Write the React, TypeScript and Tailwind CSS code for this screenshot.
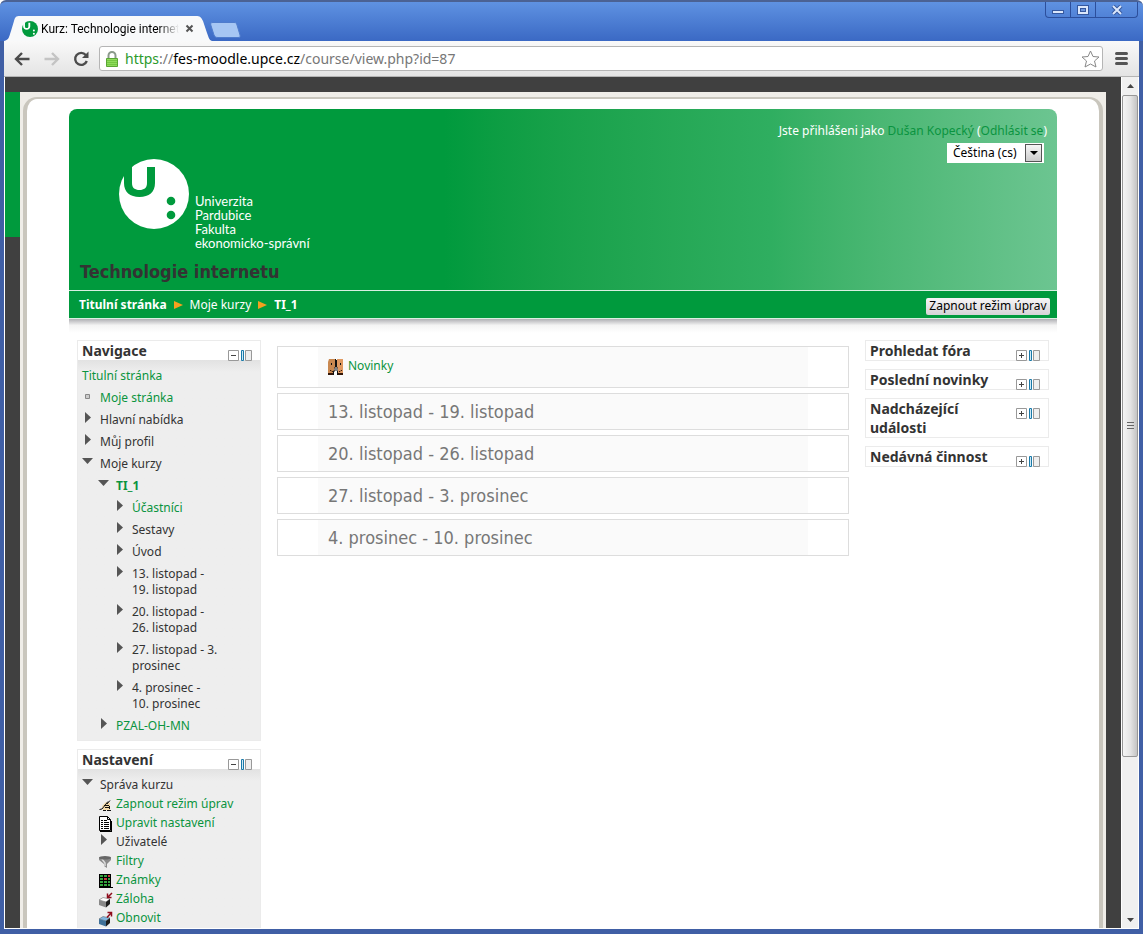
import React, { useState } from 'react';

interface TreeNode {
  label: string;
  state?: 'open' | 'closed' | 'leaf';
  link?: boolean;
  bold?: boolean;
  children?: TreeNode[];
}

const navigation: TreeNode[] = [
  { label: 'Moje stránka', state: 'leaf', link: true },
  { label: 'Hlavní nabídka', state: 'closed' },
  { label: 'Můj profil', state: 'closed' },
  {
    label: 'Moje kurzy',
    state: 'open',
    children: [
      {
        label: 'TI_1',
        state: 'open',
        link: true,
        bold: true,
        children: [
          { label: 'Účastníci', state: 'closed', link: true },
          { label: 'Sestavy', state: 'closed' },
          { label: 'Úvod', state: 'closed' },
          { label: '13. listopad -\n19. listopad', state: 'closed' },
          { label: '20. listopad -\n26. listopad', state: 'closed' },
          { label: '27. listopad - 3.\nprosinec', state: 'closed' },
          { label: '4. prosinec -\n10. prosinec', state: 'closed' },
        ],
      },
      { label: 'PZAL-OH-MN', state: 'closed', link: true },
    ],
  },
];

const weeks = [
  '13. listopad - 19. listopad',
  '20. listopad - 26. listopad',
  '27. listopad - 3. prosinec',
  '4. prosinec - 10. prosinec',
];

const sideBlocks = ['Prohledat fóra', 'Poslední novinky', 'Nadcházející události', 'Nedávná činnost'];

/* ---------- icons ---------- */

const UpceMark = ({ className = '', ink }: { className?: string; ink: string }) => (
  <svg className={className} viewBox="0 0 70 70" aria-hidden="true">
    <circle cx="35" cy="35" r="35" fill="currentColor" />
    <path d="M5 7H13V24C13 29 16 31 20.500 31C25 31 28 29 28 24V8H36V24C36 33 30 38 20.500 38C11 38 5 33 5 24Z" fill={ink} />
    <circle cx="52" cy="42" r="4.300" fill={ink} />
    <circle cx="52" cy="56" r="4.300" fill={ink} />
  </svg>
);

const NodeMarker = ({ state }: { state: TreeNode['state'] }) => (
  <svg className="w-[12px] h-[12px]" viewBox="0 0 12 12" fill="#555" aria-hidden="true">
    {state === 'open' && <path d="M0 2H11L5.500 8Z" />}
    {state === 'closed' && <path d="M3 0L9 5.500L3 11Z" />}
    {state === 'leaf' && <path d="M3.500 4.500H7.500V8.500H3.500Z" fill="#ccc" stroke="#888" />}
  </svg>
);

const EditIcon = () => (
  <svg className="w-4 h-4" viewBox="0 0 16 16" aria-hidden="true">
    <path d="M4 9L8 5L12 6L12 13L5 13Z" fill="#f3d9a8" />
    <path d="M1.500 12.500L4 12L10 4.500M12 3.500L9 7M6 8.500H11M7 10.500H11M5 13.500H8M9 13.500H13" fill="none" stroke="#111" />
    <path d="M11 9H12V12H11Z" fill="#111" />
  </svg>
);

const SettingsIcon = () => (
  <svg className="w-4 h-4" viewBox="0 0 16 16" aria-hidden="true">
    <path d="M1.500.500H9.500L12.500 3.500V14.500H1.500Z" fill="#fff" stroke="#000" />
    <path d="M9.500.500V3.500H12.500M2 15.500H14M13.500 5V15" fill="none" stroke="#000" />
    <path d="M3 4.500H5M6 4.500H9M3 6.500H5M6 6.500H11M3 8.500H5M6 8.500H11M3 10.500H5M6 10.500H11M3 12.500H5M6 12.500H11" stroke="#000" />
  </svg>
);

const FilterIcon = () => (
  <svg className="w-4 h-4" viewBox="0 0 16 16" aria-hidden="true">
    <path d="M1 3.500H13V6L9 10V14L6 12V10L1 6Z" fill="#8b8b8b" />
    <path d="M4 5L7 9V12" fill="none" stroke="#ddd" strokeWidth="1.500" />
    <ellipse cx="7" cy="3.800" rx="6" ry="1.800" fill="#666" />
  </svg>
);

const GradesIcon = () => (
  <svg className="w-4 h-4" viewBox="0 0 16 16" aria-hidden="true">
    <path d="M1 1H13V14H15V15H1Z" fill="#000" />
    <path d="M2 3H12M2 6H12M2 9H12M2 12H12" stroke="#35a53f" strokeWidth="2" />
    <path d="M6 6H9M10 3H12" stroke="#c84040" strokeWidth="2" />
    <path d="M5.500 1V14M9.500 1V14" stroke="#000" />
  </svg>
);

const BoxIcon = ({ top, out }: { top: string; out?: boolean }) => (
  <svg className="w-4 h-4" viewBox="0 0 16 16" aria-hidden="true">
    <path d="M1 8L5 5.500L12 7L8 10Z" fill={top} stroke="#555" strokeWidth=".5" />
    <path d="M1 8L8 10V15.500L1 13Z" fill={out ? '#3f7098' : '#888'} />
    <path d="M8 10L12 7V12L8 15.500Z" fill="#1c1c1c" />
    {out ? (
      <path d="M9 6.500L13 2M9.500 1.500H13.500V5.500" fill="none" stroke="#8e0c1c" strokeWidth="1.500" />
    ) : (
      <path d="M14 1L9.500 5.500M9.500 1.500V5.500H13.500" fill="none" stroke="#8e0c1c" strokeWidth="1.500" />
    )}
  </svg>
);

const ForumIcon = () => (
  <svg className="w-4 h-4" viewBox="0 0 16 16" aria-hidden="true">
    <path d="M1 0H7V9L6 10V16H0V3Z" fill="#c98850" />
    <path d="M9 0H15V16H10V10L9 9Z" fill="#e09a62" />
    <path d="M7.500 0V8M7 8V12H5.500V16M8.500 1V8M9 8V12H9.500V16" fill="none" stroke="#111" />
    <path d="M3 4H4V6H3ZM12 4H13V6H12Z" fill="#111" />
    <path d="M2 11.500H3L4 12.500H5M14 11.500H13L12 12.500H11" fill="none" stroke="#3a1a08" />
    <path d="M0 15H5M10 15H15" stroke="#321507" strokeWidth="2" />
  </svg>
);

const BlockTools = ({ collapsed }: { collapsed?: boolean }) => (
  <span className="flex gap-px mt-[9px] shrink-0">
    <button className="w-[11px] h-[11px]" aria-label={collapsed ? 'Zobrazit blok' : 'Skrýt blok'}>
      <svg viewBox="0 0 11 11" fill="#fff" aria-hidden="true">
        <path d="M.5.500H10.500V10.500H.5Z" stroke="#999" />
        <path d={collapsed ? 'M3 5.500H8M5.500 3V8' : 'M3 5.500H8'} stroke="#444" />
      </svg>
    </button>
    <button className="w-[12px] h-[11px]" aria-label="Přesunout blok do doku">
      <svg viewBox="0 0 12 11" fill="#eee" aria-hidden="true">
        <path d="M1.500.500H3.500V10.500H1.500Z" stroke="#1879a8" fill="#cfe8f5" />
        <path d="M5.500.500H11.500V10.500H5.500Z" stroke="#999" />
      </svg>
    </button>
  </span>
);

const adminLinks: { label: string; icon: React.ReactNode; plain?: boolean }[] = [
  { label: 'Zapnout režim úprav', icon: <EditIcon /> },
  { label: 'Upravit nastavení', icon: <SettingsIcon /> },
  { label: 'Uživatelé', icon: <NodeMarker state="closed" />, plain: true },
  { label: 'Filtry', icon: <FilterIcon /> },
  { label: 'Známky', icon: <GradesIcon /> },
  { label: 'Záloha', icon: <BoxIcon top="#fff" /> },
  { label: 'Obnovit', icon: <BoxIcon top="#7fb6e0" out /> },
];

/* ---------- browser window ---------- */

const TitleBar = () => (
  <div className="relative flex items-end h-[41px] shrink-0 bg-linear-to-b from-[#5f92e2] to-[#3b69c4] border-t-2 border-[#4b6294] rounded-t-md">
    <div className="relative flex items-center w-[208px] h-[25px] ml-1 pl-[18px]">
      <svg className="absolute inset-0 w-full h-full" viewBox="0 0 208 25" preserveAspectRatio="none" aria-hidden="true">
        <path d="M0 25C5 24 5 21 7 15L10 5C11 1 12 0 16 0H192C196 0 197 1 199 5L203 17C205 22 205 24 208 25Z" fill="#f8f9fa" />
      </svg>
      <UpceMark className="relative w-[16px] h-[16px] text-[#009a3d]" ink="#fff" />
      <span className="relative w-[138px] ml-[3px] whitespace-nowrap font-[Roboto,sans-serif] text-[12px] text-black mask-r-from-85%">
        Kurz: Technologie internet
      </span>
      <button className="relative ml-[6px]" aria-label="Zavřít kartu">
        <svg className="w-[9px] h-[9px]" viewBox="0 0 9 9" aria-hidden="true">
          <path d="M1.500 1.500L7.500 7.500M7.500 1.500L1.500 7.500" stroke="#555" strokeWidth="2" />
        </svg>
      </button>
    </div>
    <button className="self-end mb-[3px] -ml-[2px]" aria-label="Nová karta">
      <svg className="w-[31px] h-[16px]" viewBox="0 0 31 16" aria-hidden="true">
        <path d="M3 .5H24C26 .5 26.500 1 27 3L30 13C30.500 15 30 15.500 28 15.500H8C6 15.500 5 15 4 13L.8 3C.3 1 1 .5 3 .5Z" fill="#a6c6f3" stroke="#4f7ccc" />
      </svg>
    </button>
    <div className="absolute top-0 right-[5px] flex h-[16px] border border-t-0 border-[#2c4f9c] rounded-b-[4px] divide-x divide-[#2c4f9c]">
      <button className="w-[25px] flex justify-center items-end pb-[3px]" aria-label="Minimalizovat">
        <span className="w-[12px] h-[4px] bg-[#dbe7fb] border border-[#35589f]" />
      </button>
      <button className="w-[25px] flex justify-center items-center" aria-label="Maximalizovat">
        <span className="w-[12px] h-[10px] bg-[#dbe7fb] border border-[#35589f] flex items-center justify-center">
          <span className="w-[6px] h-[4px] border border-[#35589f] bg-[#6f97de]" />
        </span>
      </button>
      <button className="w-[41px] flex justify-center items-center" aria-label="Zavřít">
        <svg className="w-[12px] h-[10px]" viewBox="0 0 12 10" aria-hidden="true">
          <path d="M2 1L10 9M10 1L2 9" stroke="#35589f" strokeWidth="4" />
          <path d="M2 1L10 9M10 1L2 9" stroke="#dbe7fb" strokeWidth="2" />
        </svg>
      </button>
    </div>
  </div>
);

const Toolbar = () => (
  <div className="flex items-center h-[36px] shrink-0 pl-[10px] pr-[11px] bg-linear-to-b from-[#f9f9f9] to-[#e4e4e4] border-b border-[#b4b4b4]">
    <button aria-label="Zpět">
      <svg className="w-[16px] h-[14px]" viewBox="0 0 16 14" fill="none" stroke="#4c4c4c" strokeWidth="2.400" aria-hidden="true">
        <path d="M15.500 7H2M8 1L2 7L8 13" />
      </svg>
    </button>
    <button className="ml-[14px]" aria-label="Vpřed">
      <svg className="w-[16px] h-[14px]" viewBox="0 0 16 14" fill="none" stroke="#c4c4c4" strokeWidth="2.400" aria-hidden="true">
        <path d="M.5 7H14M8 1L14 7L8 13" />
      </svg>
    </button>
    <button className="ml-[13px]" aria-label="Obnovit stránku">
      <svg className="w-[16px] h-[16px]" viewBox="0 0 16 16" fill="none" aria-hidden="true">
        <path d="M12.800 4A6 6 0 1 0 13.800 10" stroke="#4c4c4c" strokeWidth="2.400" />
        <path d="M15.500 .5V7H9Z" fill="#4c4c4c" />
      </svg>
    </button>
    <div className="relative flex flex-1 items-center h-[25px] ml-[10px] px-[6px] bg-white border border-[#b5b5b5] rounded-[3px]">
      <svg className="w-[12px] h-[16px]" viewBox="0 0 12 16" aria-hidden="true">
        <path d="M2.500 8V4.500A3.500 3.500 0 0 1 9.500 4.500V8" fill="none" stroke="#8b9a8b" strokeWidth="2" />
        <path d="M.5 7.500H11.500V15.500H.5Z" fill="#8fdc5c" stroke="#5aa534" />
        <path d="M1 9.500H11M1 11.500H11M1 13.500H11" stroke="#74c643" />
      </svg>
      <a href="#" className="flex-1 ml-[7px] font-['Noto_Sans',sans-serif] text-[14px] leading-[20px] text-[#777]">
        <span className="text-[#2c9a2c]">https</span>://<span className="text-black">fes-moodle.upce.cz</span>/course/view.php?id=87
      </a>
      <button className="-mr-1" aria-label="Přidat záložku">
        <svg className="w-[19px] h-[18px]" viewBox="0 0 19 18" fill="#fff" stroke="#888" aria-hidden="true">
          <path d="M9.500 1L12 6.500L18 7L13.500 11L15 17L9.500 14L4 17L5.500 11L1 7L7 6.500Z" />
        </svg>
      </button>
    </div>
    <button className="ml-[12px]" aria-label="Nabídka">
      <svg className="w-[13px] h-[13px]" viewBox="0 0 13 13" stroke="#555" strokeWidth="3" strokeLinecap="round" aria-hidden="true">
        <path d="M1.500 1.500H11.500M1.500 6.500H11.500M1.500 11.500H11.500" />
      </svg>
    </button>
  </div>
);

const ScrollBar = () => (
  <div className="flex flex-col w-[17px] shrink-0 bg-[#f0f0f0] border-l border-white" aria-hidden="true">
    <div className="flex items-center justify-center h-[18px]">
      <svg className="w-[7px] h-[4px]" viewBox="0 0 7 4"><path d="M0 4L3.500 0L7 4Z" fill="#444" /></svg>
    </div>
    <div className="flex-1">
      <div className="flex flex-col gap-px items-center justify-center h-[81%] border border-[#979797] rounded-[2px] bg-linear-to-r from-[#f5f5f5] via-[#e6e6e6] to-[#c4c4c4]">
        <div className="w-[7px] h-[2px] border-t border-[#666]" />
        <div className="w-[7px] h-[2px] border-t border-[#666]" />
        <div className="w-[7px] h-[2px] border-t border-[#666]" />
      </div>
    </div>
    <div className="flex items-center justify-center h-[16px]">
      <svg className="w-[7px] h-[4px]" viewBox="0 0 7 4"><path d="M0 0L3.500 4L7 0Z" fill="#444" /></svg>
    </div>
  </div>
);

/* ---------- course page ---------- */

const Tree = ({ nodes }: { nodes: TreeNode[] }) => (
  <ul>
    {nodes.map((node) => (
      <li key={node.label}>
        <div className="flex py-[3px]">
          <span className="w-[18px] shrink-0"><NodeMarker state={node.state} /></span>
          {node.link ? (
            <a href="#" className={node.bold ? 'font-bold text-[#0a9440]' : 'text-[#0a9440]'}>{node.label}</a>
          ) : (
            <span className="whitespace-pre-line">{node.label}</span>
          )}
        </div>
        {node.children && <div className="pl-4"><Tree nodes={node.children} /></div>}
      </li>
    ))}
  </ul>
);

const Block = ({ title, collapsed, children }: { title: string; collapsed?: boolean; children?: React.ReactNode }) => (
  <section className="border border-[#ebebeb]">
    <div className="flex items-start justify-between pl-1 pr-2 bg-white">
      <h2 className="w-[130px] font-['Noto_Sans',sans-serif] text-[14px] leading-[19px] font-bold text-[#333]">{title}</h2>
      <span className="h-[19px]"><BlockTools collapsed={collapsed} /></span>
    </div>
    {children && (
      <div className="pl-1 pt-[5px] pb-[3px] bg-[#eee] bg-linear-to-b from-[#e2e2e2] to-[#eee] to-[12px]">{children}</div>
    )}
  </section>
);

const CourseHeader = () => {
  const [lang, setLang] = useState('cs');
  return (
    <header>
      <div className="flex justify-between h-[181px] rounded-t-lg bg-linear-to-r from-[#009a3d] from-38% via-[#2fae60] via-71% to-[#6cc591]">
        <div className="flex flex-col justify-between pl-[11px]">
          <div className="flex pl-[39px] pt-[50px]">
            <UpceMark className="w-[70px] h-[70px] text-white" ink="#009a3d" />
            <p className="pl-[6px] pt-[35px] font-[Lato,sans-serif] text-[13px] leading-[14px] text-white">
              Univerzita<br />Pardubice<br />Fakulta<br />ekonomicko-správní
            </p>
          </div>
          <h1 className="pb-[6px] font-['DejaVu_Sans_Condensed',sans-serif] text-[18px] leading-[24px] font-bold text-[#333]">Technologie internetu</h1>
        </div>
        <div className="flex flex-col items-end pt-[13px] pr-[10px] text-white">
          <p className="leading-[18px]">
            Jste přihlášeni jako <a href="#" className="text-[#0a9440]">Dušan Kopecký</a> (<a href="#" className="text-[#0a9440]">Odhlásit se</a>)
          </p>
          <div className="relative mt-[3px] mr-[3px]">
            <select
              aria-label="Jazyk"
              value={lang}
              onChange={(e) => setLang(e.target.value)}
              className="appearance-none w-[97px] h-[20px] pl-[6px] bg-white text-black leading-[18px]"
            >
              <option value="cs">Čeština (cs)</option>
              <option value="en">English (en)</option>
            </select>
            <span className="absolute top-px right-[2px] flex items-center justify-center w-[17px] h-[18px] border border-[#555] bg-linear-to-b from-[#f6f6f6] to-[#ccc] pointer-events-none">
              <svg className="w-[8px] h-[4px]" viewBox="0 0 8 4" aria-hidden="true"><path d="M0 0H8L4 4Z" fill="#000" /></svg>
            </span>
          </div>
        </div>
      </div>
      <div className="flex items-center justify-between h-[29px] pl-[10px] pr-[7px] bg-[#009a3d] border-y border-[#d9f0e1] text-white">
        <nav className="flex items-center gap-[7px] leading-[16px]">
          <a href="#" className="font-bold">Titulní stránka</a>
          <svg className="w-[9px] h-[8px]" viewBox="0 0 9 8" aria-hidden="true"><path d="M0 0L9 4L0 8Z" fill="#f5a01e" /></svg>
          <span>Moje kurzy</span>
          <svg className="w-[9px] h-[8px]" viewBox="0 0 9 8" aria-hidden="true"><path d="M0 0L9 4L0 8Z" fill="#f5a01e" /></svg>
          <a href="#" className="font-bold">TI_1</a>
        </nav>
        <button className="mt-[3px] h-[17px] w-[124px] whitespace-nowrap rounded-[2px] bg-linear-to-b from-[#f7f5f7] to-[#d6d3d6] text-black leading-[16px]">
          Zapnout režim úprav
        </button>
      </div>
      <div className="h-[14px] bg-linear-to-b from-[#b0b0b4] via-[#f4f4f4] via-45% to-white" />
    </header>
  );
};

const Section = ({ children }: { children: React.ReactNode }) => (
  <li className="px-[40px] border border-[#ddd] bg-white">
    <div className="pl-[10px] bg-[#fafafa]">{children}</div>
  </li>
);

export default function App() {
  return (
    <div className="flex flex-col h-screen overflow-hidden bg-white font-['Noto_Sans','DejaVu_Sans_Condensed',sans-serif] text-[12px] leading-[16px] text-[#333]">
      <TitleBar />
      <div className="flex flex-1 flex-col min-h-0 border-x-4 border-b-[5px] border-[#405fa5]">
        <Toolbar />
        <div className="flex flex-1 min-h-0 border-x border-b border-white">
          <main className="flex flex-1 items-start min-w-0 pt-[15px] pr-[15px] bg-[#404040] overflow-hidden">
            <div className="w-[15px] h-[145px] shrink-0 bg-[#009a3d]" />
            <div className="flex-1 min-w-0 pt-[5px] px-[3px] bg-[#efede8]">
              <div className="min-h-screen px-[42px] pt-[10px] rounded-t-[14px] bg-white border-x-4 border-t-2 border-[#c9c6bd]">
                <CourseHeader />
                <div className="flex items-start gap-4 px-2 pt-[7px]">
                  <aside className="flex flex-col gap-2 w-[184px] shrink-0">
                    <Block title="Navigace">
                      <a href="#" className="block py-[3px] text-[#0a9440]">Titulní stránka</a>
                      <Tree nodes={navigation} />
                    </Block>
                    <Block title="Nastavení">
                      <div className="flex py-[3px]">
                        <span className="w-[18px] shrink-0"><NodeMarker state="open" /></span>
                        Správa kurzu
                      </div>
                      <ul className="pl-4">
                        {adminLinks.map(({ label, icon, plain }) => (
                          <li key={label} className="flex h-[19px] leading-[16px]">
                            <span className={plain ? 'w-[18px] shrink-0' : 'w-[18px] shrink-0 pt-px'}>{icon}</span>
                            {plain ? label : <a href="#" className="text-[#0a9440]">{label}</a>}
                          </li>
                        ))}
                      </ul>
                    </Block>
                  </aside>
                  <ul className="flex flex-1 flex-col gap-[5px] min-w-0 pt-[6px]">
                    <Section>
                      <a href="#" className="flex gap-1 h-[40px] pt-[11px] text-[#0a9440]">
                        <span className="pt-px"><ForumIcon /></span>Novinky
                      </a>
                    </Section>
                    {weeks.map((week) => (
                      <Section key={week}>
                        <h3 className="font-['DejaVu_Sans_Condensed',sans-serif] text-[18px] leading-[35px] text-[#777]">{week}</h3>
                      </Section>
                    ))}
                  </ul>
                  <aside className="flex flex-col gap-2 w-[184px] shrink-0">
                    {sideBlocks.map((title) => (
                      <Block key={title} title={title} collapsed />
                    ))}
                  </aside>
                </div>
              </div>
            </div>
          </main>
          <ScrollBar />
        </div>
      </div>
    </div>
  );
}
